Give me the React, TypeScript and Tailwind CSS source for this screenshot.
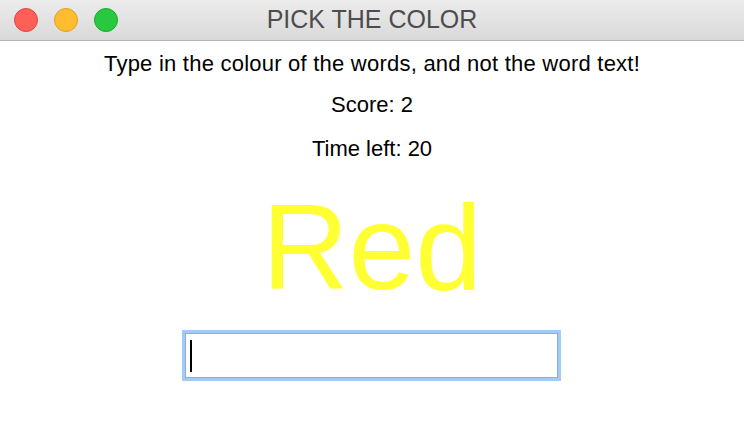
const App = () => {
  return (
    <div className="w-[744px] h-[432px] bg-white flex flex-col items-center overflow-hidden font-['Liberation_Sans',Arial,sans-serif]">
      {/* title bar */}
      <div className="relative w-full h-[41px] flex items-center justify-center bg-gradient-to-b from-[#ececec] to-[#d9d9d9] border-b border-[#b5b5b5]">
        <div className="absolute left-[14px] top-[8px] flex gap-[16px]">
          <span className="w-[24px] h-[24px] rounded-full bg-[#fe5f57] border border-[#e2463f]" />
          <span className="w-[24px] h-[24px] rounded-full bg-[#febc2e] border border-[#dea123]" />
          <span className="w-[24px] h-[24px] rounded-full bg-[#28c840] border border-[#1aab29]" />
        </div>
        <span className="text-[25px] leading-none text-[#4d4d4d] -mt-[2px]">PICK THE COLOR</span>
      </div>

      <p className="mt-[10px] text-[22px] leading-[26px] tracking-[0.23px] text-black">
        Type in the colour of the words, and not the word text!
      </p>
      <p className="mt-[15px] text-[22px] leading-[26px] text-black">Score: 2</p>
      <p className="mt-[18px] text-[22px] leading-[26px] text-black">Time left: 20</p>

      <div className="mt-[25px] text-[120px] leading-[120px] text-[#ffff33]">Red</div>

      <div className="mt-[26px] ml-[-1px] w-[373px] h-[45px] flex items-center bg-white border border-[#7fb0e6] ring-[3px] ring-[#a3cbf6]">
        <span className="ml-[4px] w-[2px] h-[32px] bg-black" />
      </div>
    </div>
  );
};

export default App;
